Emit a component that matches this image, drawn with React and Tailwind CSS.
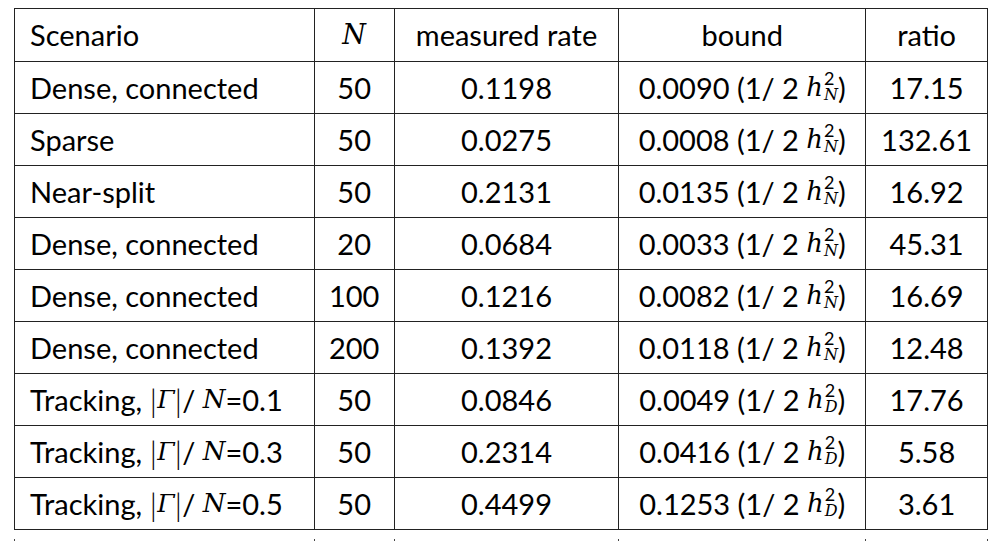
const COLS = ["w-[299px]", "w-[80px]", "w-[225px]", "w-[247px]", "w-[122px]"];

const ROWS = [
  { s: "Dense, connected", n: "50", rate: "0.1198", bound: "0.0090", sub: "N", ratio: "17.15" },
  { s: "Sparse", n: "50", rate: "0.0275", bound: "0.0008", sub: "N", ratio: "132.61" },
  { s: "Near-split", n: "50", rate: "0.2131", bound: "0.0135", sub: "N", ratio: "16.92" },
  { s: "Dense, connected", n: "20", rate: "0.0684", bound: "0.0033", sub: "N", ratio: "45.31" },
  { s: "Dense, connected", n: "100", rate: "0.1216", bound: "0.0082", sub: "N", ratio: "16.69" },
  { s: "Dense, connected", n: "200", rate: "0.1392", bound: "0.0118", sub: "N", ratio: "12.48" },
  { s: "0.1", track: true, n: "50", rate: "0.0846", bound: "0.0049", sub: "D", ratio: "17.76" },
  { s: "0.3", track: true, n: "50", rate: "0.2314", bound: "0.0416", sub: "D", ratio: "5.58" },
  { s: "0.5", track: true, n: "50", rate: "0.4499", bound: "0.1253", sub: "D", ratio: "3.61" },
];

const mathCls = "font-['DejaVu_Serif',serif] italic";

function Scenario({ row }) {
  if (!row.track) return <span>{row.s}</span>;
  return (
    <span className="inline-flex items-center whitespace-pre">
      <span>Tracking, </span>
      <span className="text-[32px] font-light leading-none">|</span>
      <span className={`${mathCls} text-[25px]`}>Γ</span>
      <span className="text-[32px] font-light leading-none">|</span>
      <span>/ </span>
      <span className={`${mathCls} text-[26px]`}>N</span>
      <span>={row.s}</span>
    </span>
  );
}

function Bound({ row }) {
  return (
    <span className="inline-flex items-center whitespace-pre">
      <span>{row.bound} (1/ 2 </span>
      <span className={`${mathCls} text-[26px]`}>h</span>
      <span className="ml-px -mt-1 inline-flex flex-col items-start leading-none">
        <span className="text-[18px]">2</span>
        <span className={`${mathCls} text-[16px]`}>{row.sub}</span>
      </span>
      <span>)</span>
    </span>
  );
}

function Cell({ i, children, left }) {
  return (
    <div
      className={`${COLS[i]} flex h-full items-center ${left ? "justify-start pl-[15px]" : "justify-center"} ${i > 0 ? "border-l border-[#222]" : ""}`}
    >
      {children}
    </div>
  );
}

export default function App() {
  return (
    <div className="h-[541px] w-[1000px] overflow-hidden bg-white pl-[14px] pt-[8px] font-['Lato',sans-serif] text-[29px] text-black">
      <div className="w-[974px] border border-[#222]">
        <div className="flex h-[52px]">
          <Cell i={0} left>Scenario</Cell>
          <Cell i={1}><span className={`${mathCls} text-[27px]`}>N</span></Cell>
          <Cell i={2}>measured rate</Cell>
          <Cell i={3}>bound</Cell>
          <Cell i={4}>ratio</Cell>
        </div>
        {ROWS.map((row, idx) => (
          <div key={idx} className="flex h-[52px] border-t border-[#222]">
            <Cell i={0} left><Scenario row={row} /></Cell>
            <Cell i={1}>{row.n}</Cell>
            <Cell i={2}>{row.rate}</Cell>
            <Cell i={3}><Bound row={row} /></Cell>
            <Cell i={4}>{row.ratio}</Cell>
          </div>
        ))}
      </div>
      <div className="mt-[9px] flex h-[6px] w-[974px] border-x border-[#444]">
        {COLS.map((c, i) => (
          <div key={i} className={`${c} ${i > 0 ? "border-l border-[#444]" : ""}`} />
        ))}
      </div>
    </div>
  );
}
